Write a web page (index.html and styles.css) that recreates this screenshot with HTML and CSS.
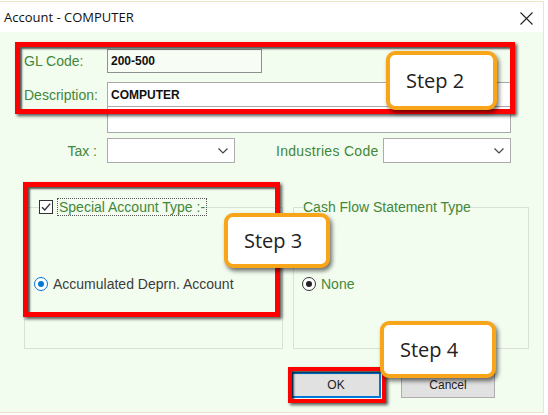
FILE: index.html
```html
<!DOCTYPE html>
<html>
<head>
<meta charset="utf-8">
<title>Account - COMPUTER</title>
<link rel="stylesheet" href="styles.css">
</head>
<body>
<div class="window">
  <div class="titlebar">
    <span class="title">Account - COMPUTER</span>
    <svg class="close" width="13" height="13" viewBox="0 0 13 13"><path d="M0.5 0.5 L12.5 12.5 M12.5 0.5 L0.5 12.5" stroke="#222" stroke-width="1.1" fill="none"/></svg>
  </div>
  <div class="body">
    <div class="row">
      <span class="lbl">GL Code:</span>
      <div class="input gl">200-500</div>
    </div>
    <div class="row desc">
      <span class="lbl">Description:</span>
      <div class="input wide">COMPUTER</div>
    </div>
    <div class="row extra">
      <span class="lbl"></span>
      <div class="input wide tall"></div>
    </div>
    <div class="row tax">
      <span class="lbl right">Tax :</span>
      <div class="select s-tax"><svg class="chev" width="10" height="6" viewBox="0 0 10 6"><path d="M0.5 0.5 L5 5 L9.5 0.5" stroke="#444" stroke-width="1.2" fill="none"/></svg></div>
      <span class="lbl2">Industries Code</span>
      <div class="select s-ind"><svg class="chev" width="10" height="6" viewBox="0 0 10 6"><path d="M0.5 0.5 L5 5 L9.5 0.5" stroke="#444" stroke-width="1.2" fill="none"/></svg></div>
    </div>
    <div class="groups">
      <fieldset class="group g-left">
        <legend class="leg-check">
          <span class="checkbox"><svg width="12" height="12" viewBox="0 0 12 12"><path d="M2 6.2 L4.8 9 L10.2 2.6" stroke="#333" stroke-width="1.4" fill="none"/></svg></span>
          <span class="focus">Special Account Type :-</span>
        </legend>
        <div class="radio-row">
          <span class="radio blue"></span>
          <span class="rtext dark">Accumulated Deprn. Account</span>
        </div>
      </fieldset>
      <fieldset class="group g-right">
        <legend class="leg-text">Cash Flow Statement Type</legend>
        <div class="radio-row">
          <span class="radio black"></span>
          <span class="rtext">None</span>
        </div>
      </fieldset>
    </div>
    <div class="buttons">
      <button class="btn ok">OK</button>
      <button class="btn cancel">Cancel</button>
    </div>
  </div>

  <div class="hl hl-1"></div>
  <div class="hl hl-2"></div>
  <div class="hl hl-3"></div>
  <div class="step step-2">Step 2</div>
  <div class="step step-3">Step 3</div>
  <div class="step step-4">Step 4</div>
</div>
</body>
</html>
```
FILE: styles.css
```css
* { box-sizing: border-box; }
html, body { margin: 0; padding: 0; background: #ffffff; }
body {
  font-family: "Liberation Sans", Arial, sans-serif;
  font-size: 14px;
  color: #43873a;
}
.window {
  position: relative;
  width: 544px;
  height: 412px;
  margin-top: 1px;
  border-top: 1px solid #ece6c6;
  border-right: 1px solid #ece6c6;
  border-bottom: 1px solid #ece6c6;
  background: #f2fcef;
}
.titlebar {
  height: 30px;
  background: #ffffff;
  display: flex;
  align-items: center;
  justify-content: space-between;
  padding: 0 10px 0 4px;
}
.title {
  font-family: "Open Sans", "Noto Sans", sans-serif;
  font-size: 13px;
  color: #111;
  margin-top: -1px;
}
.close { margin-top: 2px; }
.body {
  padding: 17px 0 0 24px;
  height: 380px;
}
.row { display: flex; align-items: center; }
.lbl { width: 83px; flex: none; }
.lbl.right { text-align: right; padding-right: 10px; }
.input {
  border: 1px solid #a9a9a9;
  background: #ffffff;
  font-size: 12px;
  font-weight: bold;
  color: #111;
  padding-left: 3px;
  display: flex;
  align-items: center;
}
.input.gl { width: 155px; height: 24px; background: #f7fdf5; border-color: #8f8f8f; }
.desc { margin-top: 9px; }
.input.wide { width: 404px; height: 25px; }
.extra { margin-top: -1px; }
.input.tall { height: 27px; }
.tax { margin-top: 5px; }
.select {
  height: 25px;
  border: 1px solid #acacac;
  background: #ffffff;
  display: flex;
  align-items: center;
  justify-content: flex-end;
  padding-right: 6px;
}
.s-tax { width: 128px; }
.s-ind { width: 128px; }
.lbl2 { margin-left: 41px; width: 107px; white-space: nowrap; letter-spacing: 0.3px; }
.groups {
  display: flex;
  gap: 10px;
  margin-top: 35px;
}
.group {
  margin: 0;
  padding: 0;
  border: 1px solid #dadfd8;
  height: 151px;
  min-width: 0;
}
.g-left { width: 259px; }
.g-right { width: 236px; }
legend { padding: 0; }
.leg-check {
  margin-left: 14px;
  display: flex;
  align-items: center;
  height: 18px;
}
.checkbox {
  width: 14px;
  height: 14px;
  border: 1px solid #333;
  background: #fff;
  display: flex;
  align-items: center;
  justify-content: center;
  margin-right: 4px;
}
.focus {
  border: 1px dotted #555;
  line-height: 16px;
  padding: 0 1px;
}
.leg-text {
  margin-left: 9px;
  line-height: 18px;
}
.radio-row {
  display: flex;
  align-items: center;
  height: 18px;
  margin-top: 59px;
  margin-left: 9px;
}
.g-right .radio-row { margin-left: 8px; }
.radio {
  width: 14px;
  height: 14px;
  border-radius: 50%;
  background: #fff;
  margin-right: 5px;
  position: relative;
  flex: none;
}
.radio.blue { border: 1px solid #0078d7; }
.radio.black { border: 1px solid #333; }
.radio::after {
  content: "";
  position: absolute;
  left: 3px; top: 3px;
  width: 6px; height: 6px;
  border-radius: 50%;
}
.radio.blue::after { background: #0078d7; }
.radio.black::after { background: #222; }
.rtext.dark { color: #3c3c3c; }
.buttons {
  display: flex;
  justify-content: flex-end;
  gap: 20px;
  margin-top: 23px;
  margin-right: 48px;
}
.btn {
  height: 26px;
  font-family: "Liberation Sans", Arial, sans-serif;
  font-size: 12px;
  color: #222;
  background: #e1e1e1;
  border: 1px solid #adadad;
  padding: 0;
}
.btn.ok { width: 90px; border: 2px solid #0078d7; }
.btn.cancel { width: 94px; }

.hl {
  position: absolute;
  border: 5px solid #ff0000;
  box-shadow: 2px 2px 3px rgba(0,0,0,0.65), inset 2px 2px 2px rgba(0,0,0,0.65);
}
.hl-1 { left: 15px; top: 40px; width: 500px; height: 72px; }
.hl-2 { left: 23px; top: 180px; width: 257px; height: 135px; }
.hl-3 { left: 288px; top: 365px; width: 98px; height: 36px; border-width: 4px; }

.step {
  position: absolute;
  background: #ffffff;
  border: 4px solid #f9a51a;
  border-radius: 9px;
  box-shadow: 2px 3px 4px rgba(0,0,0,0.55);
  font-family: "Open Sans", "Noto Sans", sans-serif;
  font-size: 20px;
  color: #222;
  display: flex;
  align-items: center;
  padding-left: 16px;
}
.step-2 { left: 386px; top: 49px; width: 111px; height: 59px; }
.step-3 { left: 224px; top: 211px; width: 106px; height: 55px; }
.step-4 { left: 380px; top: 319px; width: 116px; height: 57px; }
```
